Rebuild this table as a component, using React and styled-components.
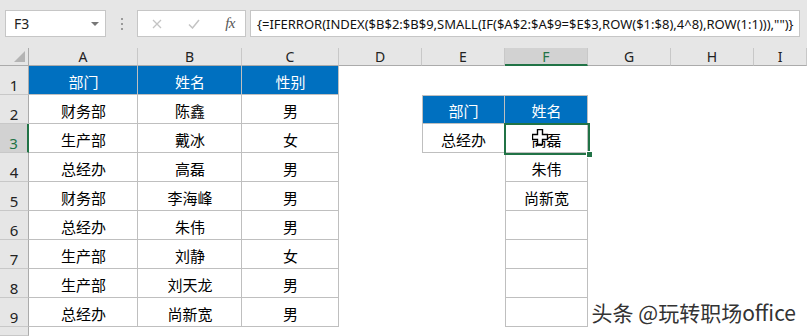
import React from "react";
import styled, { createGlobalStyle, css } from "styled-components";

const GlobalStyle = createGlobalStyle`
  html, body { margin: 0; padding: 0; background: #ffffff; overflow: hidden; }
  * { box-sizing: border-box; }
`;

const UI_FONT = `"Noto Sans", "Noto Sans CJK SC", sans-serif`;
const CJK_FONT = `"Noto Sans CJK SC", "Noto Sans", sans-serif`;
const GRID = "#bfbfbf";
const HEAD_LINE = "#c8c8c8";
const GREEN = "#217346";

const Shell = styled.div`
  width: 807px;
  height: 336px;
  position: relative;
  display: flex;
  flex-direction: column;
  background: #ffffff;
  overflow: hidden;
`;

/* formula bar */
const TopBar = styled.div`
  height: 48px;
  flex: none;
  background: #e6e6e6;
  display: flex;
  align-items: flex-start;
  padding: 10px 7px 0 5px;
`;

const Box = styled.div`
  height: 27px;
  background: #ffffff;
  border: 1px solid #c6c6c6;
  display: flex;
  align-items: center;
`;

const NameBox = styled(Box)`
  width: 101px;
  justify-content: space-between;
  padding: 0 6px 0 8px;
  font: 14px ${UI_FONT};
  color: #222;
`;

const DropTriangle = styled.span`
  width: 0;
  height: 0;
  border-left: 4px solid transparent;
  border-right: 4px solid transparent;
  border-top: 4px solid #777;
`;

const Grip = styled.div`
  width: 31px;
  height: 27px;
  display: flex;
  flex-direction: column;
  align-items: center;
  justify-content: center;
  gap: 3px;
  & > i {
    width: 2px;
    height: 2px;
    background: #9a9a9a;
  }
`;

const FnButtons = styled(Box)`
  width: 109px;
  justify-content: space-between;
  padding: 0 10px 0 14px;
`;

const FxLabel = styled.span`
  font: italic 15px "Liberation Serif", serif;
  color: #555;
  letter-spacing: -0.5px;
`;

const FormulaInput = styled(Box)`
  flex: 1;
  margin-left: 4px;
  padding-left: 6px;
  font: 13px ${UI_FONT};
  color: #111;
  white-space: nowrap;
  overflow: hidden;
`;

/* worksheet: row header + columns A..H fixed, I takes the rest */
const Sheet = styled.div`
  flex: 1;
  display: grid;
  grid-template-columns: 29px 109px 104px 97px 83px 83px 83px 83px 83px 1fr;
  grid-template-rows: 18px repeat(9, 29px) 1fr;
`;

const Corner = styled.div`
  background: #e6e6e6;
  border-right: 1px solid #ababab;
  border-bottom: 1px solid #ababab;
  position: relative;
  &::after {
    content: "";
    position: absolute;
    right: 3px;
    bottom: 3px;
    width: 0;
    height: 0;
    border-left: 11px solid transparent;
    border-bottom: 11px solid #b4b4b4;
  }
`;

const ColHead = styled.div`
  background: ${(p) => (p.$active ? "#d2d2d2" : "#e6e6e6")};
  color: ${(p) => (p.$active ? GREEN : "#222")};
  border-right: 1px solid ${HEAD_LINE};
  border-bottom: ${(p) => (p.$active ? `2px solid ${GREEN}` : "1px solid #ababab")};
  font: 14px ${UI_FONT};
  display: flex;
  align-items: center;
  justify-content: center;
  line-height: 1;
  padding-top: ${(p) => (p.$active ? "1px" : "0")};
`;

const RowHead = styled.div`
  background: ${(p) => (p.$active ? "#d2d2d2" : "#e6e6e6")};
  color: ${(p) => (p.$active ? GREEN : "#222")};
  border-right: ${(p) => (p.$active ? `2px solid ${GREEN}` : "1px solid #ababab")};
  border-bottom: 1px solid ${HEAD_LINE};
  font: 15px ${UI_FONT};
  display: flex;
  align-items: flex-end;
  justify-content: center;
  line-height: 1;
  padding-bottom: 1px;
`;

const Cell = styled.div`
  position: relative;
  z-index: ${(p) => (p.$selected ? 2 : "auto")};
  display: flex;
  align-items: center;
  justify-content: center;
  padding-top: 2px;
  font: 15px ${CJK_FONT};
  color: #000;
  background: ${(p) => (p.$head ? "#0070c0" : "#ffffff")};
  ${(p) => p.$head && css`color: #ffffff;`}
  ${(p) =>
    p.$grid &&
    css`
      box-shadow: inset -1px -1px 0 ${GRID}
        ${p.$left ? `, inset 1px 0 0 ${GRID}` : ""}
        ${p.$top ? `, inset 0 1px 0 ${GRID}` : ""};
    `}
`;

const Selection = styled.div`
  position: absolute;
  left: -1px;
  top: -1px;
  right: -2px;
  bottom: -2px;
  border: 2px solid ${GREEN};
  pointer-events: none;
`;

const FillHandle = styled.span`
  position: absolute;
  right: -5px;
  bottom: -5px;
  width: 7px;
  height: 7px;
  background: ${GREEN};
  border: 1px solid #ffffff;
`;

const CursorMark = styled.svg`
  position: absolute;
  left: 27px;
  top: 5px;
`;

const Watermark = styled.div`
  position: absolute;
  right: 11px;
  bottom: 9px;
  font: 21px ${CJK_FONT};
  color: #333;
  text-shadow: 1px 1px 0 #ffffff, -1px -1px 0 #ffffff, 1px -1px 0 #ffffff, -1px 1px 0 #ffffff;
`;

const COLS = ["A", "B", "C", "D", "E", "F", "G", "H", "I"];

const tableA = [
  ["部门", "姓名", "性别"],
  ["财务部", "陈鑫", "男"],
  ["生产部", "戴冰", "女"],
  ["总经办", "高磊", "男"],
  ["财务部", "李海峰", "男"],
  ["总经办", "朱伟", "男"],
  ["生产部", "刘静", "女"],
  ["生产部", "刘天龙", "男"],
  ["总经办", "尚新宽", "男"],
];

/* lookup block: E2:F9 */
const lookup = {
  2: { E: { t: "部门", head: true }, F: { t: "姓名", head: true } },
  3: { E: { t: "总经办" }, F: { t: "高磊", selected: true } },
  4: { F: { t: "朱伟" } },
  5: { F: { t: "尚新宽" } },
  6: { F: { t: "" } },
  7: { F: { t: "" } },
  8: { F: { t: "" } },
  9: { F: { t: "" } },
};

function MoveCursor() {
  return (
    <CursorMark width="17" height="17" viewBox="0 0 17 17">
      <polygon
        points="5.5,0.5 10.5,0.5 10.5,5.5 15.5,5.5 15.5,10.5 10.5,10.5 10.5,15.5 5.5,15.5 5.5,10.5 0.5,10.5 0.5,5.5 5.5,5.5"
        fill="#ffffff"
        stroke="#000000"
        strokeWidth="1.4"
      />
    </CursorMark>
  );
}

function SheetCells() {
  const out = [];
  out.push(<Corner key="corner" />);
  COLS.forEach((c) => {
    out.push(
      <ColHead key={`h-${c}`} $active={c === "F"}>
        {c}
      </ColHead>
    );
  });

  for (let r = 1; r <= 10; r++) {
    out.push(
      <RowHead key={`r-${r}`} $active={r === 3}>
        {r <= 9 ? r : ""}
      </RowHead>
    );
    COLS.forEach((c, ci) => {
      const key = `${c}${r}`;
      if (r <= 9 && ci < 3) {
        out.push(
          <Cell key={key} $grid $head={r === 1}>
            {tableA[r - 1][ci]}
          </Cell>
        );
        return;
      }
      const item = lookup[r] && lookup[r][c];
      if (item) {
        out.push(
          <Cell
            key={key}
            $grid
            $head={item.head}
            $selected={item.selected}
            $top={r === 2}
            $left={c === "E" || (c === "F" && r > 3)}
          >
            {item.t}
            {item.selected && (
              <>
                <MoveCursor />
                <Selection>
                  <FillHandle />
                </Selection>
              </>
            )}
          </Cell>
        );
        return;
      }
      out.push(<Cell key={key} />);
    });
  }
  return out;
}

export default function App() {
  return (
    <Shell>
      <GlobalStyle />
      <TopBar>
        <NameBox>
          <span>F3</span>
          <DropTriangle />
        </NameBox>
        <Grip>
          <i />
          <i />
          <i />
        </Grip>
        <FnButtons>
          <svg width="10" height="10" viewBox="0 0 10 10">
            <path d="M1 1 L9 9 M9 1 L1 9" stroke="#c4c4c4" strokeWidth="1.3" fill="none" />
          </svg>
          <svg width="12" height="10" viewBox="0 0 12 10">
            <path d="M1 5.5 L4.5 9 L11 1" stroke="#c4c4c4" strokeWidth="1.5" fill="none" />
          </svg>
          <FxLabel>fx</FxLabel>
        </FnButtons>
        <FormulaInput>
          {'{=IFERROR(INDEX($B$2:$B$9,SMALL(IF($A$2:$A$9=$E$3,ROW($1:$8),4^8),ROW(1:1))),"")}'}
        </FormulaInput>
      </TopBar>
      <Sheet>
        <SheetCells />
      </Sheet>
      <Watermark>头条 @玩转职场office</Watermark>
    </Shell>
  );
}
